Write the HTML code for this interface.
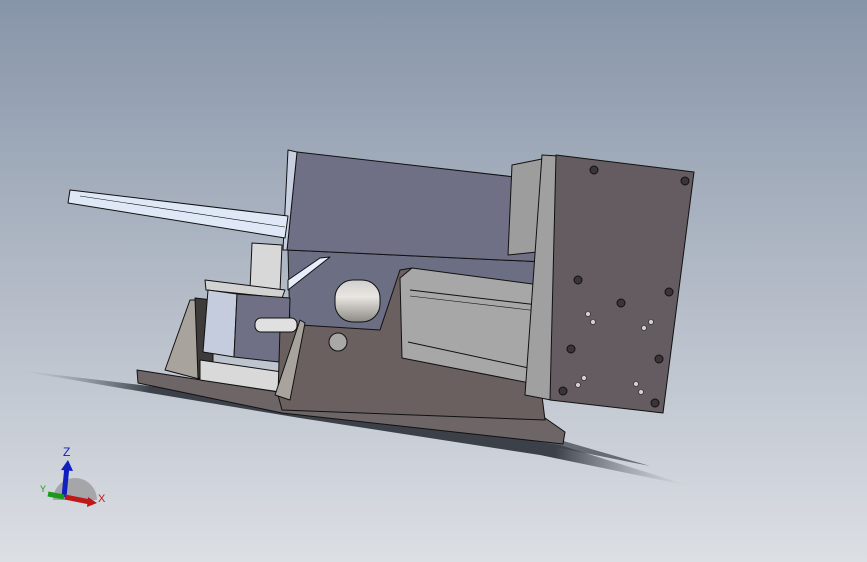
<!DOCTYPE html>
<html><head><meta charset="utf-8"><style>
html,body{margin:0;padding:0;width:867px;height:562px;overflow:hidden}
svg{display:block}
</style></head><body>
<svg width="867" height="562" viewBox="0 0 867 562" xmlns="http://www.w3.org/2000/svg">
<defs>
<linearGradient id="bg" x1="0" y1="0" x2="0" y2="1">
<stop offset="0" stop-color="#8795a9"/><stop offset="0.5" stop-color="#b2bac6"/><stop offset="1" stop-color="#dcdfe4"/>
</linearGradient>
<linearGradient id="sh" x1="0" y1="0" x2="1" y2="0">
<stop offset="0" stop-color="#9aa0a8" stop-opacity="0"/><stop offset="0.2" stop-color="#3c4048"/><stop offset="0.8" stop-color="#3c4048"/><stop offset="1" stop-color="#9aa0a8" stop-opacity="0"/>
</linearGradient>
<linearGradient id="cyl" x1="0" y1="0" x2="0" y2="1">
<stop offset="0" stop-color="#cfcfcf"/><stop offset="0.4" stop-color="#e8e6e0"/><stop offset="1" stop-color="#8d8a85"/>
</linearGradient>
</defs>
<rect width="867" height="562" fill="url(#bg)"/>
<!-- shadow -->
<polygon points="15,370 200,392 560,445 690,486 540,455 300,418 120,388" fill="url(#sh)"/>
<polygon points="380,420 560,440 650,466 560,448" fill="#3c4048" opacity="0.7"/>
<g stroke="#111" stroke-width="1" stroke-linejoin="round">
<!-- behind fill -->
<polygon points="288,250 545,262 540,380 290,330" fill="#6c6e84"/>
<!-- big plate -->
<polygon points="297,152 515,177 545,262 287,250" fill="#6f7086"/>
<polygon points="297,152 288,150 283,250 287,250" fill="#c8d0e0"/>
<!-- wing -->
<polygon points="70,190 68,203 285,238 288,216" fill="#dfe8f6"/>
<line x1="80" y1="196" x2="285" y2="227" stroke-width="0.6"/>
<!-- support -->
<polygon points="252,243 282,245 280,292 250,290" fill="#d8d8d8"/>
<!-- gap triangle -->
<polygon points="288,290 330,257 320,258 288,280" fill="#e6eefb"/>
<!-- base plate -->
<polygon points="137,370 285,393 545,418 565,432 563,444 282,413 138,383" fill="#6d6566"/>
<!-- left frame -->
<polygon points="165,370 190,300 205,300 203,380" fill="#a9a39d"/>
<polygon points="195,298 213,300 213,378 198,378" fill="#3e3b3a"/>
<!-- rail -->
<polygon points="200,360 282,372 280,392 200,380" fill="#d9d9d9"/>
<!-- blocks -->
<polygon points="205,280 285,290 282,298 206,290" fill="#d2d2d2"/>
<polygon points="208,290 237,294 234,357 203,352" fill="#c4ccdd"/>
<polygon points="237,294 290,298 288,363 234,357" fill="#6f7086"/>
<!-- main body -->
<polygon points="280,328 300,325 380,330 400,270 412,268 540,380 545,420 282,410 278,395" fill="#6b6060"/>
<polygon points="275,395 300,320 305,323 290,400" fill="#a9a39d"/>
<!-- shaft -->
<rect x="335" y="280" width="45" height="42" rx="18" fill="url(#cyl)"/>
<!-- screw -->
<rect x="255" y="318" width="42" height="14" rx="6" fill="#e0e0e0"/>
<!-- nut -->
<circle cx="338" cy="342" r="9" fill="#aaa8a4"/>
<!-- motor -->
<polygon points="400,278 412,268 540,285 540,385 402,358" fill="#a7a7a7"/>
<line x1="410" y1="290" x2="538" y2="305"/>
<line x1="410" y1="296" x2="538" y2="311" stroke-width="0.6"/>
<line x1="408" y1="342" x2="538" y2="370"/>
<!-- upper motor block -->
<polygon points="512,165 552,157 556,250 508,255" fill="#9d9d9d"/>
<!-- front plate -->
<polygon points="542,155 558,156 551,400 525,395" fill="#a0a0a0"/>
<!-- gear box -->
<polygon points="556,155 694,172 663,413 550,400" fill="#645c60"/>
</g>
<g fill="#3a3438" stroke="#111" stroke-width="1">
<circle cx="594" cy="170" r="4"/><circle cx="685" cy="181" r="4"/>
<circle cx="578" cy="280" r="4"/><circle cx="669" cy="292" r="4"/>
<circle cx="621" cy="303" r="4"/><circle cx="571" cy="349" r="4"/>
<circle cx="659" cy="359" r="4"/><circle cx="563" cy="391" r="4"/>
<circle cx="655" cy="403" r="4"/>
</g>
<g fill="#d0d0d0" stroke="#222" stroke-width="0.6">
<circle cx="588" cy="314" r="2.5"/><circle cx="593" cy="322" r="2.5"/>
<circle cx="651" cy="322" r="2.5"/><circle cx="644" cy="328" r="2.5"/>
<circle cx="584" cy="378" r="2.5"/><circle cx="578" cy="385" r="2.5"/>
<circle cx="636" cy="384" r="2.5"/><circle cx="641" cy="392" r="2.5"/>
</g>
<!-- triad -->
<path d="M53 500 A22 22 0 0 1 97 500 Z" fill="#9a9a9c" opacity="0.8"/>
<line x1="64" y1="497" x2="67" y2="466" stroke="#1020c0" stroke-width="5"/>
<polygon points="61,470 68,460 73,471" fill="#1020c0"/>
<line x1="65" y1="497" x2="90" y2="502" stroke="#c01818" stroke-width="5"/>
<polygon points="88,497 97,503 87,507" fill="#c01818"/>
<line x1="64" y1="497" x2="48" y2="494" stroke="#1a9a1a" stroke-width="5"/>
<text x="63" y="456" font-family="Liberation Sans, sans-serif" font-size="12" fill="#1020c0">Z</text>
<text x="98" y="502" font-family="Liberation Sans, sans-serif" font-size="11" fill="#c01818">X</text>
<text x="40" y="492" font-family="Liberation Sans, sans-serif" font-size="9" fill="#1a9a1a">Y</text>
</svg>
</body></html>
